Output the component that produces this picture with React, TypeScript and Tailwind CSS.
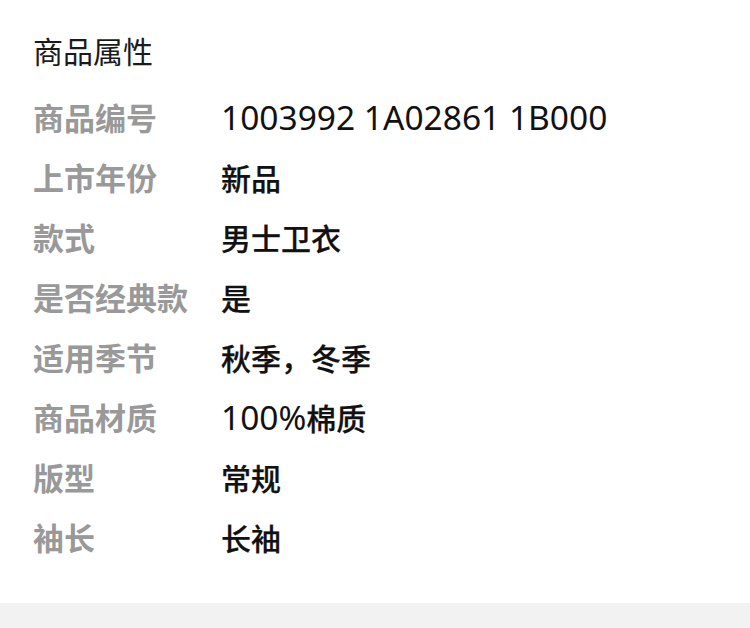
import React from 'react';

const attrs: { label: string; value: string }[] = [
  { label: '商品编号', value: '1003992 1A02861 1B000' },
  { label: '上市年份', value: '新品' },
  { label: '款式', value: '男士卫衣' },
  { label: '是否经典款', value: '是' },
  { label: '适用季节', value: '秋季，冬季' },
  { label: '商品材质', value: '100%棉质' },
  { label: '版型', value: '常规' },
  { label: '袖长', value: '长袖' },
];

// latin runs are set a bit larger than the CJK ones, as in the design
function Value({ text }: { text: string }) {
  const parts = text.split(/([\x20-\x7E]+)/).filter(Boolean);
  return (
    <span className="text-[30px] text-[#111111]">
      {parts.map((p, i) =>
        /^[\x20-\x7E]+$/.test(p) ? (
          <span key={i} className="text-[33.5px] font-normal font-['Noto_Sans','Noto_Sans_CJK_SC',sans-serif]">
            {p}
          </span>
        ) : (
          <span key={i} className="font-medium [-webkit-text-stroke:0.25px_#111111]">{p}</span>
        )
      )}
    </span>
  );
}

export default function App() {
  return (
    <div className="min-h-screen bg-[#f2f2f2] font-['Noto_Sans_CJK_SC',sans-serif]">
      <div className="bg-white pl-[33px] pt-[20px] pb-[33px]">
        {/* Title */}
        <h2 className="h-[60px] flex items-center text-[30px] font-normal text-[#1a1a1a]">商品属性</h2>

        {/* Attribute list */}
        <div className="mt-[7px] mb-[3px] flex flex-col">
          {attrs.map((a) => (
            <div key={a.label} className="h-[60px] flex items-center leading-[40px]">
              <span className="w-[188px] shrink-0 text-[31px] font-bold text-[#999999]">{a.label}</span>
              <Value text={a.value} />
            </div>
          ))}
        </div>
      </div>
      <div className="h-[25px] bg-[#f2f2f2]" />
    </div>
  );
}
